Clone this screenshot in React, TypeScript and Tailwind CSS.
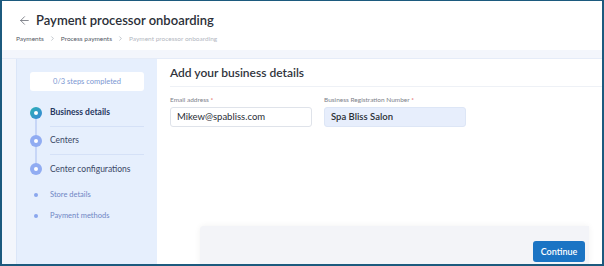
import { ArrowLeft, ChevronRight } from "lucide-react";

const steps = [
  { label: "Business details", active: true },
  { label: "Centers", active: false },
  { label: "Center configurations", active: false },
];

const subSteps = ["Store details", "Payment methods"];

function StepDot({ active }: { active: boolean }) {
  return (
    <span
      className={
        active
          ? "flex h-[12px] w-[12px] items-center justify-center rounded-full bg-gradient-to-br from-[#2bb0b4] to-[#3a86d6]"
          : "flex h-[12px] w-[12px] items-center justify-center rounded-full bg-[#91acf2]"
      }
    >
      <span className="h-[4px] w-[4px] rounded-full bg-white" />
    </span>
  );
}

export default function App() {
  return (
    <div
      className="flex h-[266px] w-[604px] flex-col overflow-hidden border-2 border-t-[1px] border-[#1c5a7e] bg-white"
      style={{ fontFamily: "Lato, 'Open Sans', sans-serif" }}
    >
      <header className="h-[49px] shrink-0 bg-white px-[14px] pt-[9px]">
        <div className="flex items-center gap-[5px]">
          <ArrowLeft size={13} strokeWidth={1.5} className="ml-[2px] text-[#6b6f78]" />
          <h1 className="text-[13px] font-semibold leading-[20px] text-[#2b2f38]">
            Payment processor onboarding
          </h1>
        </div>
        <nav className="mt-[4px] flex items-center gap-[5px] text-[6.5px] leading-[9px]">
          <span className="text-[#555a66]">Payments</span>
          <ChevronRight size={7} className="text-[#9aa0aa]" />
          <span className="text-[#555a66]">Process payments</span>
          <ChevronRight size={7} className="text-[#9aa0aa]" />
          <span className="text-[#b3b7bf]">Payment processor onboarding</span>
        </nav>
      </header>

      <div className="flex flex-1 flex-col bg-[#f3f6fc]">
        <div className="h-[9px] shrink-0 border-b border-[#e5ecf8]" />
        <div className="flex flex-1 pl-[14px]">
          <aside className="flex w-[141px] shrink-0 flex-col border-l border-[#dbe6f8] bg-[#e6effd] px-[13px] pt-[13px]">
            <div className="flex h-[19px] items-center justify-center rounded-[3px] bg-white text-[7.5px] text-[#7c97d2]">
              0/3 steps completed
            </div>

            <div className="relative mt-[8px]">
              <span className="absolute left-[5px] top-[14px] h-[56px] w-[2px] bg-[#c7d6f7]" />
              {steps.map((step, i) => (
                <div key={step.label} className="relative flex h-[28px] items-center">
                  <span className="w-[20px] shrink-0">
                    <StepDot active={step.active} />
                  </span>
                  <div
                    className={
                      i < steps.length - 1
                        ? "flex h-full flex-1 items-center border-b border-[#d5e1f7]"
                        : "flex h-full flex-1 items-center"
                    }
                  >
                    <span
                      className={
                        step.active
                          ? "whitespace-nowrap text-[8.5px] font-bold text-[#27375f]"
                          : "whitespace-nowrap text-[8.5px] text-[#3a4766]"
                      }
                    >
                      {step.label}
                    </span>
                  </div>
                </div>
              ))}
            </div>

            <div className="mt-[7px] flex flex-col gap-[11px]">
              {subSteps.map((s) => (
                <div key={s} className="flex items-center">
                  <span className="w-[20px] shrink-0 pl-[4px]">
                    <span className="block h-[4px] w-[4px] rounded-full bg-[#8aa6ee]" />
                  </span>
                  <span className="text-[7.5px] leading-[10px] text-[#6f86c4]">{s}</span>
                </div>
              ))}
            </div>
          </aside>

          <main className="flex flex-1 flex-col bg-white">
            <div className="ml-[13px] flex h-[28px] items-center border-b border-[#eef1f6]">
              <h2 className="text-[12px] font-semibold text-[#30343c]">Add your business details</h2>
            </div>

            <div className="ml-[13px] mt-[8px] flex gap-[12px]">
              <label className="flex w-[142px] flex-col">
                <span className="text-[6.5px] leading-[9px] text-[#7d818a]">
                  Email address <span className="text-[#e04848]">*</span>
                </span>
                <div className="mt-[3px] flex h-[20px] items-center rounded-[3px] border border-[#dfe3ea] bg-white px-[6px] text-[9.5px] text-[#2a2e36]">
                  Mikew@spabliss.com
                </div>
              </label>
              <label className="flex w-[142px] flex-col">
                <span className="text-[6.5px] leading-[9px] text-[#7d818a]">
                  Business Registration Number <span className="text-[#e04848]">*</span>
                </span>
                <div className="mt-[3px] flex h-[20px] items-center rounded-[3px] border border-[#dde6f6] bg-[#e7eefc] px-[6px] text-[9.5px] font-semibold text-[#2a2e36]">
                  Spa Bliss Salon
                </div>
              </label>
            </div>

            <div className="flex-1" />

            <div className="ml-[43px] mr-[13px] flex h-[38px] items-start justify-end rounded-tl-[4px] bg-[#f3f4f8] pr-[4px] pt-[15px] shadow-[0_0_6px_rgba(0,0,0,0.06)]">
              <button className="flex h-[21px] w-[52px] items-center justify-center rounded-[3px] bg-[#1b74c4] text-[9px] font-semibold text-white">
                Continue
              </button>
            </div>
          </main>
        </div>
      </div>
    </div>
  );
}
